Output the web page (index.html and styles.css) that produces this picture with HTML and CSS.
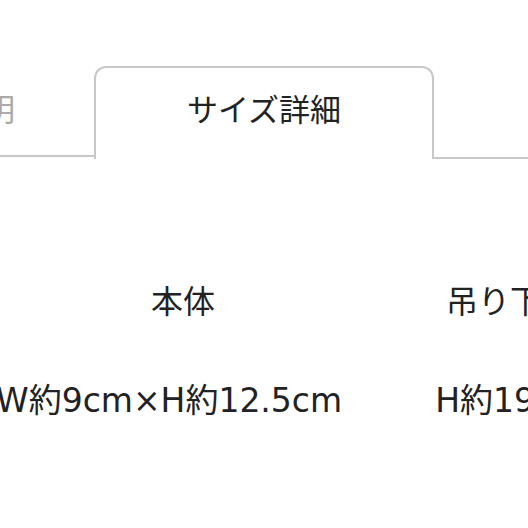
FILE: index.html
```html
<!DOCTYPE html>
<html lang="ja">
<head>
  <meta charset="UTF-8">
  <meta name="viewport" content="width=device-width, initial-scale=1.0">
  <title>サイズ詳細</title>
  <link rel="stylesheet" href="styles.css">
</head>
<body>

<div class="tabs">
  <div class="tab">商品説明</div>
  <div class="tab active">サイズ詳細</div>
  <div class="tab-rest"></div>
</div>

<div class="size-table">
  <div class="size-col first">
    <div class="size-name">本体</div>
    <div class="size-value">W約9cm×H約12.5cm</div>
  </div>
  <div class="size-col">
    <div class="size-name">吊り下げ紐</div>
    <div class="size-value">H約19.5cm</div>
  </div>
</div>

</body>
</html>
```

FILE: styles.css
```css
body {
  margin: 0;
  background: #fff;
  color: #222;
  font-family: "Liberation Sans", "Noto Sans CJK JP", sans-serif;
  overflow: hidden;
}
.tabs {
  display: flex;
  margin-top: 66px;
  margin-left: -188px;
  width: 900px;
}
.tab {
  flex: none;
  width: 282px;
  height: 91px;
  box-sizing: border-box;
  padding-top: 29px;
  font-size: 31px;
  line-height: 31px;
  text-align: center;
  color: #aaa;
  border-bottom: 2px solid #c8c8c8;
}
.tab.active {
  width: 340px;
  height: 93px;
  color: #222;
  border: 2px solid #c8c8c8;
  border-bottom: none;
  border-radius: 12px 12px 0 0;
  padding-top: 27px;
}
.tab-rest {
  flex: 1;
  height: 91px;
  border-bottom: 2px solid #c8c8c8;
}
.size-table {
  display: flex;
  gap: 93px;
  margin-top: 124px;
  margin-left: -4px;
  width: 900px;
}
.size-col {
  flex: none;
  text-align: center;
  line-height: 32px;
}
.size-name {
  font-family: "Noto Sans CJK JP", sans-serif;
  font-size: 32px;
  margin-bottom: 70px;
}
.first .size-name {
  padding-left: 28px;
}
.size-value {
  font-family: "DejaVu Sans", "Noto Sans CJK JP", sans-serif;
  font-size: 33px;
}
```
